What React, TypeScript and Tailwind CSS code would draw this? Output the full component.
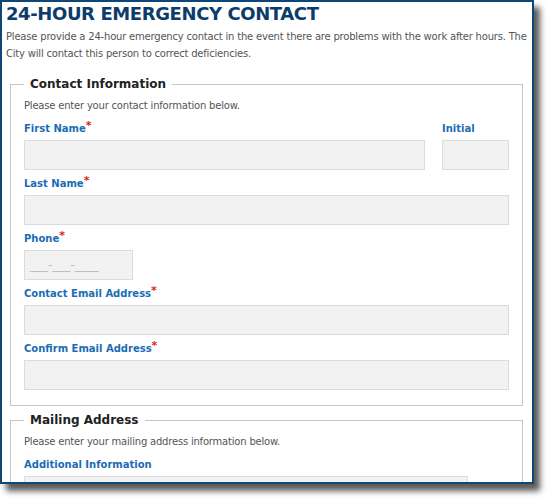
export default function App() {
  return (
    <div className="w-[549px] h-[501px] bg-white overflow-hidden" style={{ fontFamily: '"DejaVu Sans", Verdana, sans-serif' }}>
      <div className="w-[534px] h-[484px] border-2 border-[#0d4777] shadow-[6px_7px_6px_rgba(0,0,0,0.65)] overflow-hidden bg-white">
        <div className="pl-1 pr-[4px]">
          <h1 className="text-[18px] leading-[24px] font-bold text-[#0b3c6b] tracking-[-0.4px]">24-HOUR EMERGENCY CONTACT</h1>
          <p className="mt-[2px] text-[10px] leading-[17px] text-[#555] tracking-[-0.2px]">
            Please provide a 24-hour emergency contact in the event there are problems with the work after hours. The City will contact this person to correct deficiencies.
          </p>
        </div>

        <fieldset className="ml-2 mr-[9px] mt-[13px] border border-[#c6c6c6] px-[13px] pb-[15px]">
          <legend className="px-[6px] text-[12px] leading-[18px] font-bold text-[#222]">Contact Information</legend>
          <p className="mt-[5px] text-[10px] leading-[16px] text-[#555] tracking-[-0.2px]">Please enter your contact information below.</p>
          <div className="mt-[6px] flex gap-[17px]">
            <div className="flex-1">
              <Label text="First Name" required />
              <Input />
            </div>
            <div className="w-[67px]">
              <Label text="Initial" />
              <Input />
            </div>
          </div>
          <Label text="Last Name" required />
          <Input />
          <Label text="Phone" required />
          <div className="w-[109px] h-[30px] mb-[5px] bg-[#f2f2f2] border border-[#dcdcdc] flex items-center px-[5px] text-[12px] text-[#bbb]">
            ___-___-____
          </div>
          <Label text="Contact Email Address" required />
          <Input />
          <Label text="Confirm Email Address" required />
          <div className="h-[30px] bg-[#f2f2f2] border border-[#dcdcdc]" />
        </fieldset>

        <fieldset className="ml-2 mr-[9px] mt-[5px] border border-[#c6c6c6] px-[13px] pb-[15px]">
          <legend className="px-[6px] text-[12px] leading-[18px] font-bold text-[#222]">Mailing Address</legend>
          <p className="mt-[5px] text-[10px] leading-[16px] text-[#555] tracking-[-0.2px]">Please enter your mailing address information below.</p>
          <div className="mt-[6px]">
            <Label text="Additional Information" />
            <div className="w-[444px] h-[30px] bg-[#f2f2f2] border border-[#dcdcdc]" />
          </div>
        </fieldset>
      </div>
    </div>
  );
}

function Label({ text, required }: { text: string; required?: boolean }) {
  return (
    <div className="h-[16px] mb-[4px] text-[10px] leading-[18px] font-bold text-[#1a6db3] whitespace-nowrap">
      {text}
      {required && <span className="text-[#e21b1b] text-[11px] relative top-[-3px]">*</span>}
    </div>
  );
}

function Input() {
  return <div className="h-[30px] mb-[5px] bg-[#f2f2f2] border border-[#dcdcdc]" />;
}
